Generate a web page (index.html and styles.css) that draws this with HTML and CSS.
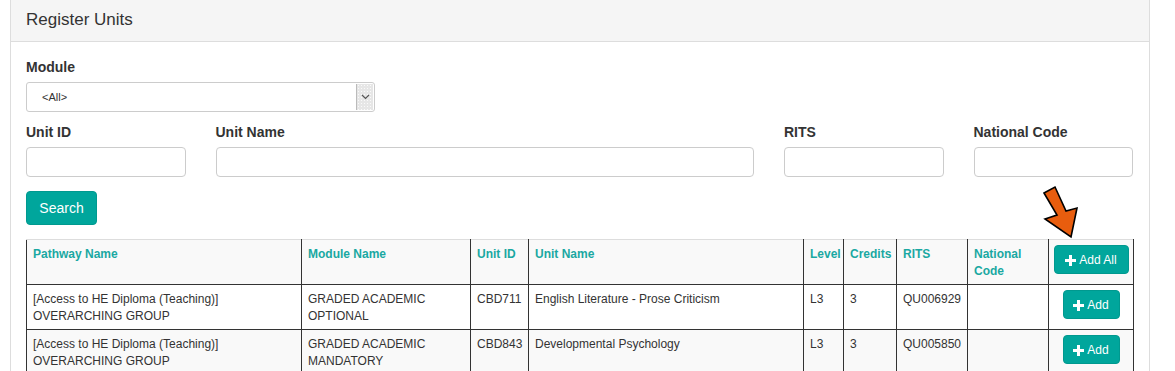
FILE: index.html
```html
<!DOCTYPE html>
<html>
<head>
<meta charset="utf-8">
<link rel="stylesheet" href="styles.css">
</head>
<body>
<div class="panel">
  <div class="panel-heading">Register Units</div>
  <div class="panel-body">
    <div class="form-group">
      <div class="label">Module</div>
      <div class="select">
        <span class="select-text">&lt;All&gt;</span>
        <span class="select-btn"><svg width="9" height="6" viewBox="0 0 9 6"><path d="M1 1 L4.5 4.5 L8 1" fill="none" stroke="#555" stroke-width="1.2"/></svg></span>
      </div>
    </div>
    <div class="row">
      <div class="col col2"><div class="label">Unit ID</div><div class="input"></div></div>
      <div class="col col6"><div class="label">Unit Name</div><div class="input"></div></div>
      <div class="col col2"><div class="label">RITS</div><div class="input"></div></div>
      <div class="col col2"><div class="label">National Code</div><div class="input"></div></div>
    </div>
    <button class="btn btn-search">Search</button>
    <div class="table-wrap">
      <table class="units">
        <colgroup>
          <col style="width:275px"><col style="width:169px"><col style="width:58px"><col style="width:275px"><col style="width:40px"><col style="width:53px"><col style="width:71px"><col style="width:81px"><col style="width:85px">
        </colgroup>
        <tr class="head">
          <td>Pathway Name</td><td>Module Name</td><td>Unit ID</td><td>Unit Name</td><td>Level</td><td>Credits</td><td>RITS</td><td>National Code</td>
          <td class="act"><button class="btn btn-add btn-all"><span class="plus"></span>Add All</button></td>
        </tr>
        <tr>
          <td>[Access to HE Diploma (Teaching)]<br>OVERARCHING GROUP</td><td>GRADED ACADEMIC<br>OPTIONAL</td><td>CBD711</td><td>English Literature - Prose Criticism</td><td>L3</td><td>3</td><td>QU006929</td><td></td>
          <td class="act"><button class="btn btn-add"><span class="plus"></span>Add</button></td>
        </tr>
        <tr class="stripe">
          <td>[Access to HE Diploma (Teaching)]<br>OVERARCHING GROUP</td><td>GRADED ACADEMIC<br>MANDATORY</td><td>CBD843</td><td>Developmental Psychology</td><td>L3</td><td>3</td><td>QU005850</td><td></td>
          <td class="act"><button class="btn btn-add"><span class="plus"></span>Add</button></td>
        </tr>
      </table>
      <svg class="arrow" width="44" height="60" viewBox="0 0 44 60">
        <polygon points="4,11 15,5 26,29 37,26 31,55 5,37 17,33" fill="#e85d0e" stroke="#000" stroke-width="1.6" stroke-linejoin="miter"/>
      </svg>
    </div>
  </div>
</div>
</body>
</html>
```

FILE: styles.css
```css
* { box-sizing: border-box; }
html, body { margin: 0; padding: 0; background: #fff; }
body {
  font-family: "Liberation Sans", Arial, sans-serif;
  color: #333;
  font-size: 14px;
  line-height: 20px;
}
.panel {
  width: 1140px;
  margin: -1px 0 0 10px;
  border: 1px solid #ddd;
  border-bottom: none;
  height: 373px;
}
.panel-heading {
  background: #f5f5f5;
  border-bottom: 1px solid #ddd;
  height: 42px;
  padding: 9px 15px 0;
  font-size: 17px;
  line-height: 22px;
  color: #333;
}
.panel-body { padding: 15px 15px 0; }
.label {
  font-weight: bold;
  font-size: 14px;
  line-height: 20px;
  margin-bottom: 5px;
  color: #333;
}
.form-group { margin-bottom: 10px; }
.select {
  width: 349px;
  height: 30px;
  border: 1px solid #ccc;
  border-radius: 3px;
  display: flex;
  align-items: stretch;
  background: #fff;
}
.select-text {
  flex: 1;
  font-size: 11px;
  padding-left: 15px;
  line-height: 28px;
  color: #333;
}
.select-btn {
  width: 17px;
  margin: 1px 1px 1px 0;
  background-color: #e6e6e6;
  background-image: radial-gradient(#fafafa 0.8px, transparent 0.9px);
  background-size: 3px 3px;
  border-left: 1px solid #bbb;
  display: flex;
  align-items: center;
  justify-content: center;
}
.row {
  display: flex;
  margin: 0 -15px;
}
.col { padding: 0 15px; }
.col2 { width: 189.5px; }
.col6 { width: 568.5px; }
.input {
  height: 30px;
  border: 1px solid #ccc;
  border-radius: 4px;
  background: #fff;
}
.btn {
  font-family: "Liberation Sans", Arial, sans-serif;
  background: #00a69c;
  border: 1px solid #00998f;
  color: #fff;
  border-radius: 4px;
  cursor: pointer;
  padding: 0;
}
.btn-search {
  margin-top: 14px;
  width: 71px;
  height: 34px;
  font-size: 14px;
  line-height: 20px;
}
.table-wrap {
  position: relative;
  margin-top: 14px;
}
.units {
  border-collapse: collapse;
  table-layout: fixed;
  width: 1107px;
  font-size: 12px;
  line-height: 17px;
}
.units td {
  border: 1px solid #333;
  padding: 6px 6px 4px;
  vertical-align: top;
  height: 45px;
  color: #333;
}
.units tr.head td {
  border-top: 1px solid #ddd;
  background: #f9f9f9;
  color: #1aa8a2;
  font-weight: bold;
  height: 45px;
}
.units tr.stripe td { background: #f9f9f9; }
.units td.act { text-align: center; padding: 5px 0; }
.btn-add {
  width: 57px;
  height: 29px;
  font-size: 12px;
  line-height: 17px;
  display: inline-flex;
  align-items: center;
  justify-content: center;
  padding-top: 2px;
}
.btn-all { width: 75px; }
.plus {
  display: inline-block;
  position: relative;
  width: 11px;
  height: 11px;
  margin-right: 3px;
  margin-top: -1px;
}
.plus::before, .plus::after {
  content: "";
  position: absolute;
  background: #fff;
}
.plus::before { left: 0; top: 4px; width: 11px; height: 3px; }
.plus::after { left: 4px; top: 0; width: 3px; height: 11px; }
.arrow {
  position: absolute;
  left: 1014px;
  top: -57px;
}
```
